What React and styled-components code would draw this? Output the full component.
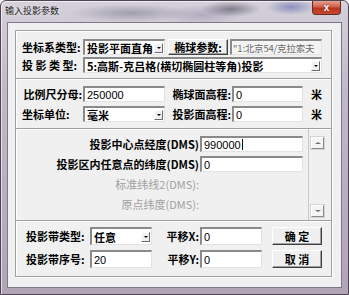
import styled, { createGlobalStyle } from "styled-components";

const GlobalStyle = createGlobalStyle`
  html, body {
    margin: 0;
    padding: 0;
    background: #ffffff;
  }
`;

const CJK = `"Noto Sans CJK SC", "Liberation Sans", sans-serif`;
const LATIN = `"Liberation Sans", "Noto Sans CJK SC", sans-serif`;

const Styled = {
  Window: styled.div`
    width: 349px;
    height: 295px;
    display: flex;
    flex-direction: column;
    box-sizing: border-box;
    border: 1px solid #4e4454;
    border-radius: 6px 6px 0 0;
    background:
      radial-gradient(ellipse 60px 9px at 130px 12px, rgba(120, 118, 140, 0.55), transparent),
      radial-gradient(ellipse 30px 8px at 230px 8px, rgba(60, 60, 80, 0.55), transparent),
      radial-gradient(ellipse 25px 8px at 290px 6px, rgba(70, 80, 160, 0.5), transparent),
      radial-gradient(ellipse 40px 10px at 200px 14px, rgba(140, 130, 160, 0.45), transparent),
      linear-gradient(180deg, #d4d1da 0%, #c2b9c8 30%, #b1a4b6 100%);
    box-shadow: inset 1px 1px 0 rgba(255, 255, 255, 0.6);
    overflow: hidden;
  `,

  TitleBar: styled.div`
    height: 21px;
    display: flex;
    align-items: flex-start;
    justify-content: space-between;
    padding-left: 4px;
    padding-right: 7px;
  `,

  Title: styled.span`
    font-family: ${CJK};
    font-size: 9px;
    line-height: 9px;
    color: #1c1c24;
    margin-top: 5px;
    text-shadow: 0 0 4px rgba(255, 255, 255, 0.9);
  `,

  Close: styled.div`
    width: 29px;
    height: 14px;
    box-sizing: border-box;
    border: 1px solid #6b2a24;
    border-top: none;
    border-radius: 0 0 4px 4px;
    background: linear-gradient(180deg, #e6a08f 0%, #d0604b 45%, #b8341f 55%, #c94a30 100%);
    display: flex;
    align-items: center;
    justify-content: center;
    color: #ffffff;
    font-family: ${LATIN};
    font-weight: bold;
    font-size: 10px;
    line-height: 10px;
    text-shadow: 0 0 2px #5a1a10;
  `,

  Client: styled.div`
    flex: 1;
    margin: 0 6px 6px 6px;
    box-sizing: border-box;
    border: 1px solid #7c7886;
    background: #f0f0f0;
    padding: 7px 9px 10px 7px;
    display: flex;
  `,

  Group: styled.div`
    flex: 1;
    display: flex;
    flex-direction: column;
    border: 1px solid #a0a0a0;
    box-shadow: inset 1px 1px 0 #ffffff, 1px 1px 0 #ffffff;
  `,

  Section: styled.div`
    display: flex;
    flex-direction: column;
    gap: ${({ gap }) => gap}px;
    padding: ${({ pad }) => pad};
    border-top: ${({ line }) => (line ? "1px solid #a0a0a0" : "none")};
    box-shadow: ${({ line }) => (line ? "inset 0 1px 0 #ffffff" : "none")};
  `,

  Row: styled.div`
    display: flex;
    align-items: center;
    height: ${({ h }) => h || 16}px;
  `,

  Label: styled.span`
    width: ${({ w }) => w}px;
    flex: none;
    text-align: ${({ right }) => (right ? "right" : "left")};
    padding-right: ${({ right }) => (right ? 1 : 0)}px;
    box-sizing: border-box;
    font-family: ${CJK};
    font-size: 11px;
    line-height: 14px;
    white-space: pre;
    color: ${({ grey }) => (grey ? "#a0a0a0" : "#000000")};
    font-weight: ${({ grey }) => (grey ? "normal" : "bold")};
  `,

  Input: styled.div`
    width: ${({ w }) => w}px;
    height: 100%;
    flex: none;
    box-sizing: border-box;
    border-style: solid;
    border-width: 2px 1px 1px 2px;
    border-color: #8a8a8a #e3e3e3 #e3e3e3 #8a8a8a;
    background: ${({ disabled }) => (disabled ? "#f4f4f4" : "#ffffff")};
    color: ${({ disabled }) => (disabled ? "#6d6d6d" : "#000000")};
    padding-left: ${({ small }) => (small ? 1 : 2)}px;
    display: flex;
    align-items: center;
    overflow: hidden;
    white-space: nowrap;
    font-family: ${({ cjk }) => (cjk ? CJK : LATIN)};
    font-weight: normal;
    font-size: ${({ small }) => (small ? 9.5 : 11)}px;
    letter-spacing: ${({ small }) => (small ? -0.2 : 0)}px;
    line-height: 12px;
  `,

  Caret: styled.span`
    display: inline-block;
    width: 1px;
    height: 11px;
    background: #000000;
    margin-left: 1px;
  `,

  Select: styled.div`
    width: ${({ w }) => w}px;
    height: 100%;
    flex: none;
    box-sizing: border-box;
    border-style: solid;
    border-width: 2px 1px 1px 2px;
    border-color: #8a8a8a #e3e3e3 #e3e3e3 #8a8a8a;
    background: #ffffff;
    display: flex;
    align-items: center;
    justify-content: space-between;
    padding-left: 2px;
    padding-right: 1px;
    overflow: hidden;
    white-space: nowrap;
    font-family: ${CJK};
    font-weight: bold;
    font-size: 11px;
    line-height: 12px;
  `,

  Arrow: styled.span`
    width: 9px;
    height: 10px;
    flex: none;
    box-sizing: border-box;
    border: 1px solid;
    border-color: #ffffff #6a6a6a #6a6a6a #ffffff;
    background: #f0f0f0;
    display: flex;
    align-items: center;
    justify-content: center;

    &::after {
      content: "";
      border-left: 2px solid transparent;
      border-right: 2px solid transparent;
      border-top: 2px solid #000000;
    }
  `,

  Button: styled.div`
    width: ${({ w }) => w}px;
    height: 100%;
    flex: none;
    box-sizing: border-box;
    border: 1px solid;
    border-color: #ffffff #404040 #404040 #ffffff;
    box-shadow: inset -1px -1px 0 #a0a0a0;
    background: #f0f0f0;
    display: flex;
    align-items: center;
    justify-content: center;
    font-family: ${CJK};
    font-weight: bold;
    font-size: 11px;
    line-height: 12px;
    white-space: pre;
  `,

  Unit: styled.span`
    width: 19px;
    flex: none;
    text-align: right;
    font-family: ${CJK};
    font-weight: bold;
    font-size: 11px;
  `,

  ScrollPanel: styled.div`
    display: flex;
    height: 91px;
    border-top: 1px solid #a0a0a0;
    border-bottom: 1px solid #a0a0a0;
    box-shadow: inset 0 1px 0 #ffffff, 0 1px 0 #ffffff;
  `,

  ScrollBody: styled.div`
    flex: 1;
    display: flex;
    flex-direction: column;
    gap: 4px;
    padding-top: 7px;
  `,

  ScrollBar: styled.div`
    width: 23px;
    flex: none;
    border-left: 1px solid #c8c8c8;
    display: flex;
    flex-direction: column;
    justify-content: space-between;
    align-items: flex-start;
    padding: 8px 0 3px 2px;
    box-sizing: border-box;
  `,

  ScrollButton: styled.span`
    width: 13px;
    height: 12px;
    box-sizing: border-box;
    border: 1px solid;
    border-color: #ffffff #8a8a8a #8a8a8a #ffffff;
    box-shadow: 0 0 0 1px #d4d4d4;
    background: #f4f4f4;
    display: flex;
    align-items: center;
    justify-content: center;

    &::after {
      content: "";
      border-left: 3px solid transparent;
      border-right: 3px solid transparent;
      border-${({ up }) => (up ? "bottom" : "top")}: 2px solid #707070;
    }
  `,

  Spacer: styled.span`
    width: ${({ w }) => w}px;
    flex: none;
  `,
};

function InputDialog() {
  return (
    <Styled.Window>
      <Styled.TitleBar>
        <Styled.Title>输入投影参数</Styled.Title>
        <Styled.Close>x</Styled.Close>
      </Styled.TitleBar>
      <Styled.Client>
        <Styled.Group>
          <Styled.Section gap={2} pad="8px 0 5px 6px">
            <Styled.Row>
              <Styled.Label w={61}>坐标系类型:</Styled.Label>
              <Styled.Select w={82}>
                <span>投影平面直角</span>
                <Styled.Arrow />
              </Styled.Select>
              <Styled.Spacer w={3} />
              <Styled.Button w={60}>椭球参数:</Styled.Button>
              <Styled.Spacer w={2} />
              <Styled.Input w={92} cjk disabled small>
                "1:北京54/克拉索夫
              </Styled.Input>
            </Styled.Row>
            <Styled.Row>
              <Styled.Label w={61}>投 影 类 型:</Styled.Label>
              <Styled.Select w={239}>
                <span>5:高斯-克吕格(横切椭圆柱等角)投影</span>
                <Styled.Arrow />
              </Styled.Select>
            </Styled.Row>
          </Styled.Section>

          <Styled.Section gap={4} pad="7px 0 6px 6px" line>
            <Styled.Row>
              <Styled.Label w={61} right>
                比例尺分母:
              </Styled.Label>
              <Styled.Input w={82}>250000</Styled.Input>
              <Styled.Label w={67} right>
                椭球面高程:
              </Styled.Label>
              <Styled.Input w={71}>0</Styled.Input>
              <Styled.Unit>米</Styled.Unit>
            </Styled.Row>
            <Styled.Row>
              <Styled.Label w={61}>坐标单位:</Styled.Label>
              <Styled.Select w={82}>
                <span>毫米</span>
                <Styled.Arrow />
              </Styled.Select>
              <Styled.Label w={67} right>
                投影面高程:
              </Styled.Label>
              <Styled.Input w={71}>0</Styled.Input>
              <Styled.Unit>米</Styled.Unit>
            </Styled.Row>
          </Styled.Section>

          <Styled.ScrollPanel>
            <Styled.ScrollBody>
              <Styled.Row>
                <Styled.Label w={184} right>
                  投影中心点经度(DMS)
                </Styled.Label>
                <Styled.Input w={103}>
                  990000
                  <Styled.Caret />
                </Styled.Input>
              </Styled.Row>
              <Styled.Row>
                <Styled.Label w={184} right>
                  投影区内任意点的纬度(DMS)
                </Styled.Label>
                <Styled.Input w={103}>0</Styled.Input>
              </Styled.Row>
              <Styled.Row>
                <Styled.Label w={184} right grey>
                  标准纬线2(DMS):
                </Styled.Label>
              </Styled.Row>
              <Styled.Row>
                <Styled.Label w={184} right grey>
                  原点纬度(DMS):
                </Styled.Label>
              </Styled.Row>
            </Styled.ScrollBody>
            <Styled.ScrollBar>
              <Styled.ScrollButton up />
              <Styled.ScrollButton />
            </Styled.ScrollBar>
          </Styled.ScrollPanel>

          <Styled.Section gap={5} pad="6px 0 6px 10px">
            <Styled.Row h={18}>
              <Styled.Label w={64}>投影带类型:</Styled.Label>
              <Styled.Select w={62}>
                <span>任意</span>
                <Styled.Arrow />
              </Styled.Select>
              <Styled.Label w={48} right>
                平移X:
              </Styled.Label>
              <Styled.Input w={62}>0</Styled.Input>
              <Styled.Spacer w={10} />
              <Styled.Button w={50}>确 定</Styled.Button>
            </Styled.Row>
            <Styled.Row h={18}>
              <Styled.Label w={64}>投影带序号:</Styled.Label>
              <Styled.Input w={62}>20</Styled.Input>
              <Styled.Label w={48} right>
                平移Y:
              </Styled.Label>
              <Styled.Input w={62}>0</Styled.Input>
              <Styled.Spacer w={10} />
              <Styled.Button w={50}>取 消</Styled.Button>
            </Styled.Row>
          </Styled.Section>
        </Styled.Group>
      </Styled.Client>
    </Styled.Window>
  );
}

export default function App() {
  return (
    <>
      <GlobalStyle />
      <InputDialog />
    </>
  );
}
